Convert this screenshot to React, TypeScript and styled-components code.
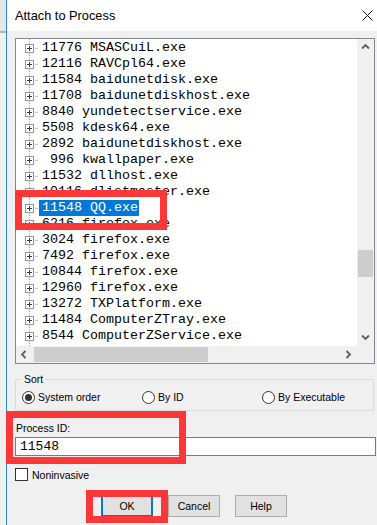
import React from "react";
import styled, { createGlobalStyle } from "styled-components";

const GlobalStyle = createGlobalStyle`
  html, body {
    margin: 0;
    padding: 0;
    width: 377px;
    height: 525px;
    overflow: hidden;
    background: #f0f0f0;
  }
  #root { width: 377px; height: 525px; }
`;

const UI_FONT = `"Liberation Sans", Arial, sans-serif`;
const MONO_FONT = `"Liberation Mono", "Courier New", monospace`;

const Screen = styled.div`
  position: relative;
  display: flex;
  width: 377px;
  height: 525px;
  overflow: hidden;
  font-family: ${UI_FONT};
  color: #000;
`;

const BackWindow = styled.div`
  flex: none;
  width: 6px;
  display: flex;
  flex-direction: column;
  background: #f0f0f0;
`;

const BackTitle = styled.div`
  height: 31px;
  background: #e6e6e6;
  border-bottom: 2px solid #b4b4b4;
`;

const Dialog = styled.div`
  flex: none;
  width: 383px;
  display: flex;
  flex-direction: column;
  border-left: 1px solid #2b88d8;
  background: #f0f0f0;
`;

const TitleBar = styled.div`
  height: 31px;
  flex: none;
  display: flex;
  align-items: center;
  background: #fff;
  padding-left: 8px;
`;

const TitleText = styled.span`
  font-size: 12.8px;
  flex: 1;
`;

const CloseButton = styled.div`
  width: 46px;
  height: 31px;
  display: flex;
  align-items: center;
  justify-content: center;
`;

const Body = styled.div`
  display: flex;
  flex-direction: column;
  padding: 7px 15px 0 8px;
  font-size: 10.5px;
`;

const TreeBox = styled.div`
  height: 326px;
  box-sizing: border-box;
  border: 1px solid #828790;
  background: #fff;
  display: grid;
  grid-template-columns: 1fr 17px;
  grid-template-rows: 1fr 17px;
`;

const List = styled.div`
  padding-top: 1px;
  overflow: hidden;
  font-family: ${MONO_FONT};
  font-size: 13.33px;
  background-image: linear-gradient(to bottom, #a0a0a0 50%, transparent 50%);
  background-size: 1px 2px;
  background-repeat: repeat-y;
  background-position: 13px 0;
`;

const Row = styled.div`
  display: flex;
  align-items: center;
  height: 16px;
  padding-left: 9px;
  white-space: pre;
`;

const Expander = styled.span`
  display: flex;
  width: 9px;
  height: 9px;
  flex: none;
`;

const Connector = styled.span`
  width: 5px;
  height: 1px;
  flex: none;
  background-image: linear-gradient(to right, transparent 50%, #a0a0a0 50%);
  background-size: 2px 1px;
`;

const Label = styled.span<{ $selected?: boolean }>`
  height: 16px;
  line-height: 16px;
  padding: 0 1px 0 3px;
  background: ${(p) => (p.$selected ? "#0078d7" : "transparent")};
  color: ${(p) => (p.$selected ? "#fff" : "#000")};
`;

const VScroll = styled.div`
  background: #f0f0f0;
  display: flex;
  flex-direction: column;
`;

const HScroll = styled.div`
  background: #f0f0f0;
  display: flex;
  align-items: stretch;
`;

const Corner = styled.div`
  background: #f0f0f0;
`;

const ArrowButton = styled.div`
  flex: none;
  width: 17px;
  height: 17px;
  display: flex;
  align-items: center;
  justify-content: center;
`;

const VTrack = styled.div`
  flex: 1;
  display: flex;
  flex-direction: column;
  align-items: center;
`;

const VThumb = styled.div<{ $offset: number; $size: number }>`
  width: 15px;
  margin-top: ${(p) => p.$offset}px;
  height: ${(p) => p.$size}px;
  background: #cdcdcd;
`;

const HTrack = styled.div`
  flex: 1;
  display: flex;
  align-items: center;
`;

const HThumb = styled.div<{ $offset: number; $size: number }>`
  height: 15px;
  margin-left: ${(p) => p.$offset}px;
  width: ${(p) => p.$size}px;
  background: #cdcdcd;
`;

const GroupBox = styled.fieldset`
  margin: 7px 1px 0 0;
  padding: 2px 6px 5px 6px;
  border: 1px solid #dcdcdc;
  min-width: 0;
`;

const Legend = styled.legend`
  padding: 0 2px;
  line-height: 16px;
  font-size: 10.5px;
`;

const RadioRow = styled.div`
  display: flex;
  align-items: center;
  height: 16px;
`;

const RadioOption = styled.label<{ $width: number }>`
  display: flex;
  align-items: center;
  gap: 3px;
  width: ${(p) => p.$width}px;
  flex: none;
`;

const RadioCircle = styled.span<{ $checked?: boolean }>`
  width: 13px;
  height: 13px;
  box-sizing: border-box;
  border-radius: 50%;
  border: 1px solid #333;
  background: #fff;
  display: flex;
  align-items: center;
  justify-content: center;
  &::after {
    content: "";
    display: ${(p) => (p.$checked ? "block" : "none")};
    width: 7px;
    height: 7px;
    border-radius: 50%;
    background: #333;
  }
`;

const FieldLabel = styled.div`
  margin-top: 10px;
  line-height: 14px;
  padding-left: 1px;
`;

const TextInput = styled.div`
  margin-top: 2px;
  margin-right: -1px;
  height: 19px;
  box-sizing: border-box;
  border: 1px solid #7a7a7a;
  background: #fff;
  display: flex;
  align-items: center;
  padding-left: 4px;
  font-family: ${MONO_FONT};
  font-size: 13px;
`;

const CheckRow = styled.label`
  margin-top: 12px;
  display: flex;
  align-items: center;
  gap: 4px;
  height: 13px;
`;

const CheckBox = styled.span`
  width: 13px;
  height: 13px;
  box-sizing: border-box;
  border: 1px solid #333;
  background: #fff;
`;

const ButtonRow = styled.div`
  margin-top: 14px;
  padding-left: 86px;
  display: flex;
  gap: 15px;
`;

const Button = styled.div<{ $default?: boolean }>`
  width: 52px;
  height: 22px;
  box-sizing: border-box;
  display: flex;
  align-items: center;
  justify-content: center;
  background: #e1e1e1;
  border: ${(p) => (p.$default ? "2px solid #0078d7" : "1px solid #adadad")};
  font-size: 10.5px;
`;

const Annotation = styled.div<{ $x: number; $y: number; $w: number; $h: number }>`
  position: absolute;
  left: ${(p) => p.$x}px;
  top: ${(p) => p.$y}px;
  width: ${(p) => p.$w}px;
  height: ${(p) => p.$h}px;
  box-sizing: border-box;
  border: 7px solid #fb3737;
  pointer-events: none;
`;

const PlusIcon = () => (
  <svg width="9" height="9" viewBox="0 0 9 9">
    <rect x="0.5" y="0.5" width="8" height="8" fill="#fff" stroke="#919aa8" />
    <path d="M2 4.5H7M4.5 2V7" stroke="#2b3f6b" strokeWidth="1" />
  </svg>
);

const CloseIcon = () => (
  <svg width="11" height="11" viewBox="0 0 11 11">
    <path d="M0.5 0.5L10.5 10.5M10.5 0.5L0.5 10.5" stroke="#111" strokeWidth="1" />
  </svg>
);

const Chevron = ({ dir }: { dir: "up" | "down" | "left" | "right" }) => {
  const d = {
    up: "M1 5.5L4.5 2L8 5.5",
    down: "M1 2.5L4.5 6L8 2.5",
    left: "M5.5 1L2 4.5L5.5 8",
    right: "M2.5 1L6 4.5L2.5 8",
  }[dir];
  return (
    <svg width="9" height="9" viewBox="0 0 9 9">
      <path d={d} fill="none" stroke="#606060" strokeWidth="1.8" />
    </svg>
  );
};

const processes: string[] = [
  "11776 MSASCuiL.exe",
  "12116 RAVCpl64.exe",
  "11584 baidunetdisk.exe",
  "11708 baidunetdiskhost.exe",
  "8840 yundetectservice.exe",
  "5508 kdesk64.exe",
  "2892 baidunetdiskhost.exe",
  " 996 kwallpaper.exe",
  "11532 dllhost.exe",
  "10116 dlistmaster.exe",
  "11548 QQ.exe",
  "6216 firefox.exe",
  "3024 firefox.exe",
  "7492 firefox.exe",
  "10844 firefox.exe",
  "12960 firefox.exe",
  "13272 TXPlatform.exe",
  "11484 ComputerZTray.exe",
  "8544 ComputerZService.exe",
];

const SELECTED = "11548 QQ.exe";

export default function App() {
  return (
    <>
      <GlobalStyle />
      <Screen>
        <BackWindow>
          <BackTitle />
        </BackWindow>
        <Dialog>
          <TitleBar>
            <TitleText>Attach to Process</TitleText>
            <CloseButton>
              <CloseIcon />
            </CloseButton>
          </TitleBar>
          <Body>
            <TreeBox>
              <List>
                {processes.map((p) => (
                  <Row key={p}>
                    <Expander>
                      <PlusIcon />
                    </Expander>
                    <Connector />
                    <Label $selected={p === SELECTED}>{p}</Label>
                  </Row>
                ))}
              </List>
              <VScroll>
                <ArrowButton>
                  <Chevron dir="up" />
                </ArrowButton>
                <VTrack>
                  <VThumb $offset={194} $size={27} />
                </VTrack>
                <ArrowButton>
                  <Chevron dir="down" />
                </ArrowButton>
              </VScroll>
              <HScroll>
                <ArrowButton>
                  <Chevron dir="left" />
                </ArrowButton>
                <HTrack>
                  <HThumb $offset={1} $size={174} />
                </HTrack>
                <ArrowButton>
                  <Chevron dir="right" />
                </ArrowButton>
              </HScroll>
              <Corner />
            </TreeBox>

            <GroupBox>
              <Legend>Sort</Legend>
              <RadioRow>
                <RadioOption $width={120}>
                  <RadioCircle $checked />
                  System order
                </RadioOption>
                <RadioOption $width={120}>
                  <RadioCircle />
                  By ID
                </RadioOption>
                <RadioOption $width={100}>
                  <RadioCircle />
                  By Executable
                </RadioOption>
              </RadioRow>
            </GroupBox>

            <FieldLabel>Process ID:</FieldLabel>
            <TextInput>11548</TextInput>

            <CheckRow>
              <CheckBox />
              Noninvasive
            </CheckRow>

            <ButtonRow>
              <Button $default>OK</Button>
              <Button>Cancel</Button>
              <Button>Help</Button>
            </ButtonRow>
          </Body>
        </Dialog>

        <Annotation $x={15} $y={190} $w={152} $h={40} />
        <Annotation $x={6} $y={411} $w={180} $h={53} />
        <Annotation $x={86} $y={490} $w={82} $h={33} />
      </Screen>
    </>
  );
}
